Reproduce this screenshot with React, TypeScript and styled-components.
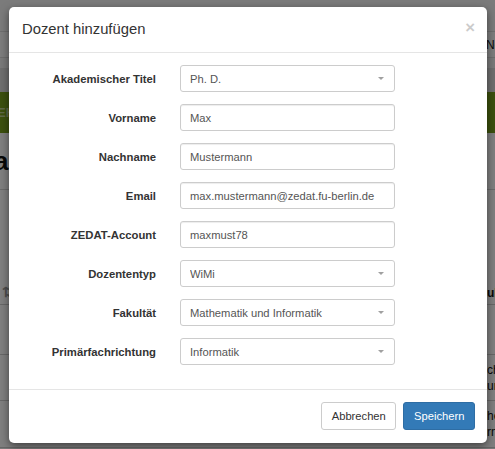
import React from "react";
import styled, { createGlobalStyle } from "styled-components";

const GlobalStyle = createGlobalStyle`
  html, body {
    margin: 0;
    padding: 0;
    background: #ffffff;
  }
  body {
    font-family: "Liberation Sans", Arial, Helvetica, sans-serif;
    color: #333333;
  }
  * {
    box-sizing: border-box;
  }
`;

const Viewport = styled.div`
  position: relative;
  width: 495px;
  height: 449px;
  overflow: hidden;
  background: #f4f4f4;
`;

/* ---------- page behind the dialog ---------- */

const Page = styled.div`
  display: flex;
  flex-direction: column;
  width: 100%;
  height: 100%;
`;

const TopBar = styled.div`
  height: 32px;
  background: #f6f6f6;
  border-bottom: 1px solid #dcdcdc;
`;

const SubNav = styled.div`
  display: flex;
  align-items: center;
  height: 26px;
  padding-left: 486px;
  background: #fafafa;
  border-bottom: 1px solid #dcdcdc;
  font-size: 12px;
  color: #111;
  white-space: nowrap;
`;

const Band = styled.div<{ $tone: string; $h: number }>`
  display: flex;
  align-items: center;
  height: ${(p) => p.$h}px;
  background: ${(p) => p.$tone};
  color: rgba(255, 255, 255, 0.55);
  font-weight: bold;
  font-size: 13px;
  white-space: nowrap;
`;

const BandText = styled.span`
  margin-left: -3px;
`;

const HeadingArea = styled.div`
  display: flex;
  align-items: center;
  height: 57px;
  border-bottom: 1px solid #d6d6d6;
  background: #ffffff;
`;

const PageHeading = styled.h1`
  margin: 0 0 0 -6px;
  font-size: 26px;
  font-weight: bold;
  color: #111;
  white-space: nowrap;
`;

const Accent = styled.span`
  color: #c44a1d;
`;

const TableHead = styled.div`
  display: grid;
  grid-template-columns: 487px 1fr;
  align-items: end;
  height: 115px;
  padding-bottom: 4px;
  border-bottom: 1px solid #cfcfcf;
  background: #ffffff;
  font-size: 12px;
  font-weight: bold;
  color: #111;
  white-space: nowrap;
  overflow: hidden;
`;

const SortIcon = styled.span`
  color: #9a9a9a;
  font-size: 14px;
  margin-left: 2px;
`;

const TableRow = styled.div<{ $h: number }>`
  display: grid;
  grid-template-columns: 487px 1fr;
  align-items: center;
  height: ${(p) => p.$h}px;
  border-bottom: 1px solid #cfcfcf;
  background: #ffffff;
  font-size: 12px;
  line-height: 16px;
  color: #111;
  white-space: nowrap;
  overflow: hidden;
`;

const Backdrop = styled.div`
  position: absolute;
  inset: 0;
  background: rgba(0, 0, 0, 0.5);
`;

/* ---------- dialog ---------- */

const Dialog = styled.div`
  position: absolute;
  left: 9px;
  top: 7px;
  width: 478px;
  background: #ffffff;
  border-radius: 5px;
  box-shadow: 0 3px 9px rgba(0, 0, 0, 0.5);
  overflow: hidden;
`;

const Header = styled.div`
  display: flex;
  align-items: center;
  justify-content: space-between;
  padding: 12px 12px 12px 13px;
  border-bottom: 1px solid #e5e5e5;
`;

const Title = styled.h4`
  margin: 0;
  font-size: 14.8px;
  font-weight: normal;
  line-height: 21px;
  color: #333333;
`;

const Close = styled.button`
  border: 0;
  background: transparent;
  padding: 0;
  margin-top: -3px;
  font-family: "Liberation Sans", Arial, sans-serif;
  font-size: 16.8px;
  font-weight: bold;
  line-height: 1;
  color: #000;
  opacity: 0.2;
  cursor: pointer;
`;

const Body = styled.form`
  display: flex;
  flex-direction: column;
  gap: 12px;
  padding: 12px 12px 24px;
`;

const Row = styled.div`
  display: flex;
  align-items: center;
  gap: 24px;
`;

const Label = styled.label`
  width: 135px;
  text-align: right;
  font-size: 11.3px;
  font-weight: bold;
  color: #333333;
  white-space: nowrap;
`;

const controlCss = `
  width: 215px;
  height: 27px;
  padding: 0 9px;
  border: 1px solid #cccccc;
  border-radius: 3px;
  background: #ffffff;
  box-shadow: inset 0 1px 1px rgba(0, 0, 0, 0.075);
  font-family: "Liberation Sans", Arial, sans-serif;
  font-size: 11.2px;
  color: #555555;
  outline: none;
`;

const TextInput = styled.input`
  ${controlCss}
`;

const SelectWrap = styled.div`
  position: relative;
  width: 215px;

  &::after {
    content: "";
    position: absolute;
    right: 11px;
    top: 12px;
    border-left: 3px solid transparent;
    border-right: 3px solid transparent;
    border-top: 3px solid #a0a0a0;
    pointer-events: none;
  }
`;

const Select = styled.select`
  ${controlCss}
  appearance: none;
  -webkit-appearance: none;
  box-shadow: none;
`;

const Footer = styled.div`
  display: flex;
  justify-content: flex-end;
  gap: 7px;
  padding: 12px 12px 13px;
  border-top: 1px solid #e5e5e5;
`;

const Button = styled.button<{ $primary?: boolean }>`
  height: 28px;
  padding: 0 9.6px;
  border-radius: 3px;
  border: 1px solid ${(p) => (p.$primary ? "#2e6da4" : "#cccccc")};
  background: ${(p) => (p.$primary ? "#337ab7" : "#ffffff")};
  color: ${(p) => (p.$primary ? "#ffffff" : "#333333")};
  font-family: "Liberation Sans", Arial, sans-serif;
  font-size: 11.2px;
  cursor: pointer;
`;

type Field = { label: string; kind: "text" | "select"; value: string };

const fields: Field[] = [
  { label: "Akademischer Titel", kind: "select", value: "Ph. D." },
  { label: "Vorname", kind: "text", value: "Max" },
  { label: "Nachname", kind: "text", value: "Mustermann" },
  { label: "Email", kind: "text", value: "max.mustermann@zedat.fu-berlin.de" },
  { label: "ZEDAT-Account", kind: "text", value: "maxmust78" },
  { label: "Dozententyp", kind: "select", value: "WiMi" },
  { label: "Fakultät", kind: "select", value: "Mathematik und Informatik" },
  { label: "Primärfachrichtung", kind: "select", value: "Informatik" },
];

export default function App() {
  return (
    <>
      <GlobalStyle />
      <Viewport>
        <Page>
          <TopBar />
          <SubNav>Neu</SubNav>
          <Band $tone="#f4f4f4" $h={10} />
          <Band $tone="#dedede" $h={24} />
          <Band $tone="#78a01c" $h={41}>
            <BandText>EHRE</BandText>
          </Band>
          <HeadingArea>
            <PageHeading>
              a<Accent>l</Accent>
            </PageHeading>
          </HeadingArea>
          <TableHead>
            <SortIcon>⇅</SortIcon>
            <span>ult</span>
          </TableHead>
          <TableRow $h={50}>
            <span />
            <span />
          </TableRow>
          <TableRow $h={46}>
            <span />
            <span>
              ch
              <br />
              ur
            </span>
          </TableRow>
          <TableRow $h={47}>
            <span />
            <span>
              he
              <br />
              rn
            </span>
          </TableRow>
        </Page>
        <Backdrop />
        <Dialog>
          <Header>
            <Title>Dozent hinzufügen</Title>
            <Close type="button">×</Close>
          </Header>
          <Body>
            {fields.map((f) => (
              <Row key={f.label}>
                <Label>{f.label}</Label>
                {f.kind === "select" ? (
                  <SelectWrap>
                    <Select defaultValue={f.value}>
                      <option>{f.value}</option>
                    </Select>
                  </SelectWrap>
                ) : (
                  <TextInput type="text" defaultValue={f.value} />
                )}
              </Row>
            ))}
          </Body>
          <Footer>
            <Button type="button">Abbrechen</Button>
            <Button type="button" $primary>
              Speichern
            </Button>
          </Footer>
        </Dialog>
      </Viewport>
    </>
  );
}
